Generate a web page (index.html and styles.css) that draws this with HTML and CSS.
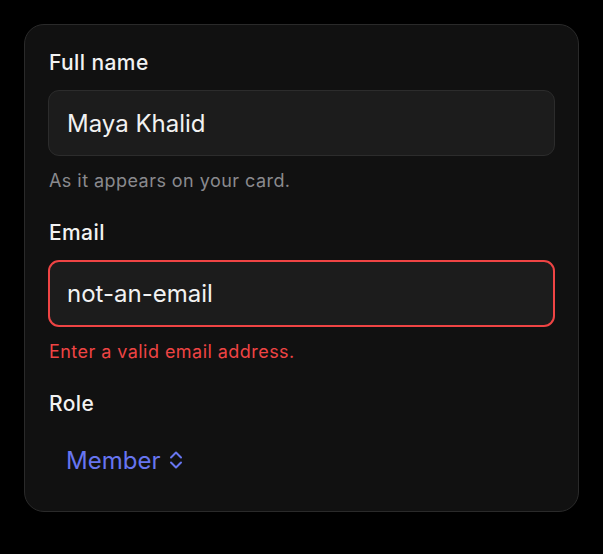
FILE: index.html
```html
<!DOCTYPE html>
<html>
<head>
<meta charset="utf-8">
<link rel="stylesheet" href="styles.css">
</head>
<body>
<form class="card">
  <div class="field">
    <label class="label">Full name</label>
    <div class="input">Maya Khalid</div>
    <p class="hint">As it appears on your card.</p>
  </div>
  <div class="field">
    <label class="label">Email</label>
    <div class="input input-error">not-an-email</div>
    <p class="hint hint-error">Enter a valid email address.</p>
  </div>
  <div class="field">
    <label class="label">Role</label>
    <div class="picker">
      <span>Member</span>
      <svg class="chev" width="14" height="20" viewBox="0 0 14 20" fill="none" stroke="currentColor" stroke-width="2" stroke-linecap="round" stroke-linejoin="round"><path d="M2 7.5 L7 2.5 L12 7.5"/><path d="M2 12.5 L7 17.5 L12 12.5"/></svg>
    </div>
  </div>
</form>
</body>
</html>
```
FILE: styles.css
```css
html, body {
  margin: 0;
  padding: 0;
  background: #000;
}
body {
  padding: 24px;
  font-family: Inter, "Noto Sans", sans-serif;
  color: #f2f2f2;
}
.card {
  width: 555px;
  box-sizing: border-box;
  background: #111111;
  border: 1px solid #2a2a2a;
  border-radius: 20px;
  padding: 26px 23px 29px;
  display: flex;
  flex-direction: column;
  gap: 29px;
}
.field {
  display: flex;
  flex-direction: column;
}
.label {
  font-size: 21px;
  line-height: 24px;
  font-weight: 500;
  letter-spacing: 0.4px;
  margin-bottom: 15px;
  padding-left: 1px;
}
.input {
  height: 66px;
  box-sizing: border-box;
  display: flex;
  align-items: center;
  padding: 0 18px;
  background: #1c1c1c;
  border: 1px solid #2c2c2c;
  border-radius: 11px;
  font-size: 24px;
  color: #f2f2f2;
}
.input-error {
  height: 67px;
  border: 2px solid #ef4444;
  padding: 0 17px;
}
.hint {
  margin: 14px 0 0;
  padding-left: 1px;
  font-size: 18px;
  line-height: 22px;
  letter-spacing: 0.45px;
  color: #8a8a8e;
}
.hint-error {
  color: #ef4444;
}
.picker {
  margin-top: 7px;
  height: 44px;
  display: flex;
  align-items: center;
  gap: 9px;
  padding: 0 18px;
  font-size: 24px;
  color: #6775f0;
}
.chev {
  display: block;
}
```
